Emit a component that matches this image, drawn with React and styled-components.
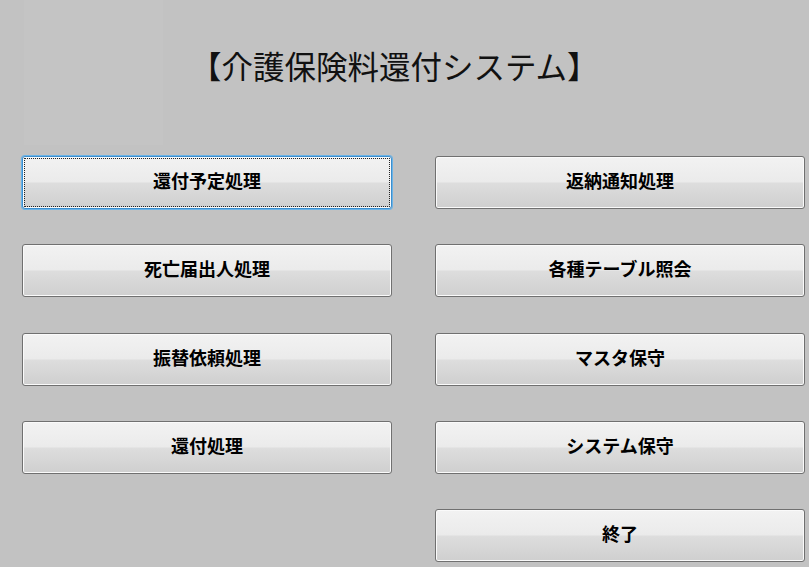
import styled, { createGlobalStyle } from "styled-components";

const GlobalStyle = createGlobalStyle`
    html, body {
        margin: 0;
        padding: 0;
        background-color: #c2c2c2;
    }

    body {
        font-family: "Noto Sans CJK JP", "Noto Sans", sans-serif;
    }
`;

const leftMenu = ["還付予定処理", "死亡届出人処理", "振替依頼処理", "還付処理"];
const rightMenu = ["返納通知処理", "各種テーブル照会", "マスタ保守", "システム保守", "終了"];

export default function App() {
    return (
        <Page>
            <GlobalStyle />

            <Header>
                <Shade />
                <Title>【介護保険料還付システム】</Title>
            </Header>

            <Menu>
                <Column>
                    {leftMenu.map((label, i) => (
                        <MenuButton key={label} focused={i === 0}>{label}</MenuButton>
                    ))}
                </Column>
                <Column>
                    {rightMenu.map((label) => (
                        <MenuButton key={label}>{label}</MenuButton>
                    ))}
                </Column>
            </Menu>
        </Page>
    );
}

const Page = styled.div`
    width: 809px;
    height: 567px;
    overflow: hidden;
`;

const Header = styled.div`
    display: flex;
    align-items: flex-start;
    height: 156px;
    padding-left: 24px;
    box-sizing: border-box;
`;

const Shade = styled.div`
    width: 139px;
    height: 145px;
    flex-shrink: 0;
    background-color: #c4c4c4;
`;

const Title = styled.h1`
    margin: 44px 0 0 27px;
    font-family: "Noto Sans CJK JP", sans-serif;
    font-size: 31.5px;
    font-weight: 400;
    line-height: 42px;
    color: #111;
    letter-spacing: 0;
`;

const Menu = styled.div`
    display: grid;
    grid-template-columns: 370px 370px;
    column-gap: 43px;
    padding-left: 22px;
`;

const Column = styled.div`
    display: flex;
    flex-direction: column;
    gap: 35.3px;
`;

const MenuButton = styled.button.withConfig({
    shouldForwardProp: (prop) => prop !== "focused",
})`
    height: 53px;
    width: 100%;
    border: 1px solid ${(p) => (p.focused ? "#3c8fcf" : "#707070")};
    border-radius: 3px;
    background: linear-gradient(#f2f2f2 0%, #ebebeb 48%, #dddddd 52%, #cfcfcf 100%);
    box-shadow: ${(p) =>
        p.focused
            ? "0 0 0 1px #6bb3e6, inset 0 0 0 1px #fbfbfb"
            : "inset 0 0 0 1px #fafafa"};
    outline: ${(p) => (p.focused ? "1px dotted #222" : "none")};
    outline-offset: -3px;
    font-family: "Noto Sans CJK JP", sans-serif;
    font-size: 18px;
    font-weight: 700;
    line-height: 24px;
    color: #000;
    cursor: pointer;
    padding: 0 0 5px;
`;
